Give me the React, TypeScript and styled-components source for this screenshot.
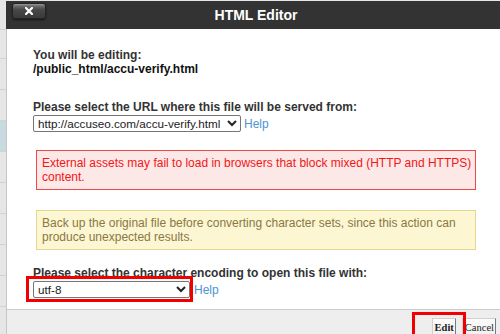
import React from "react";
import styled, { createGlobalStyle } from "styled-components";

const Global = createGlobalStyle`
  html, body { margin: 0; padding: 0; }
  body {
    background: #e6e6e6;
    font-family: "Liberation Sans", Arial, sans-serif;
    font-size: 12px;
    color: #333;
    overflow: hidden;
  }
`;

const Page = styled.div`
  display: flex;
  width: 500px;
  height: 334px;
  overflow: hidden;
`;

const Strip = styled.div`
  width: 6px;
  flex: none;
  display: flex;
  flex-direction: column;
`;

const StripRow = styled.div<{ $h: number; $blue?: boolean }>`
  height: ${(p) => p.$h}px;
  flex: none;
  background: ${(p) => (p.$blue ? "#c9d9e2" : "#e6e6e6")};
  border-bottom: 1px solid #d2d2d2;
`;

const Dialog = styled.div`
  flex: 1;
  margin-top: 1px;
  display: flex;
  flex-direction: column;
`;

const Header = styled.div`
  height: 28px;
  background: #333333;
  display: flex;
  align-items: flex-start;
  padding-left: 6px;
`;

const CloseButton = styled.button`
  width: 34px;
  height: 16px;
  margin-top: 2px;
  padding: 0;
  border: 1px solid #242424;
  border-radius: 3px;
  background: linear-gradient(#9a9a9a 0%, #6c6c6c 14%, #484848 40%, #3a3a3a 100%);
  box-shadow: 0 1px 2px rgba(0, 0, 0, 0.6);
  display: flex;
  align-items: center;
  justify-content: center;
`;

const Title = styled.div`
  flex: 1;
  text-align: center;
  color: #ffffff;
  font-weight: bold;
  font-size: 14px;
  line-height: 28px;
  margin-right: 34px;
`;

const Body = styled.div`
  background: #ffffff;
  border-left: 1px solid #c6c6c6;
  padding: 19px 24px 11px 26px;
  display: flex;
  flex-direction: column;
`;

const Label = styled.div<{ $dark?: boolean; $mt?: number }>`
  font-weight: bold;
  line-height: 14px;
  color: ${(p) => (p.$dark ? "#111" : "#333")};
  margin-top: ${(p) => p.$mt ?? 0}px;
`;

const SelectRow = styled.div`
  display: flex;
  align-items: center;
  margin-top: 1px;
  height: 17px;
`;

const SelectWrap = styled.div`
  position: relative;
  display: flex;
`;

const Select = styled.select<{ $w: number }>`
  width: ${(p) => p.$w}px;
  height: 17px;
  font-family: "Liberation Sans", Arial, sans-serif;
  font-size: 11.7px;
  color: #222;
  background: #fff;
  border: 1px solid #767676;
  border-radius: 2px;
  padding: 0;
  margin: 0;
`;

const Help = styled.a<{ $ml: number }>`
  color: #4d94d0;
  text-decoration: none;
  margin-left: ${(p) => p.$ml}px;
  line-height: 14px;
`;

const Notice = styled.div<{ $kind: "error" | "warn"; $mt: number }>`
  margin: ${(p) => p.$mt}px 0 0 3px;
  padding: 5px 2px 5px 5px;
  line-height: 14px;
  white-space: nowrap;
  border: 1px solid ${(p) => (p.$kind === "error" ? "#f04848" : "#e4d88e")};
  background: ${(p) => (p.$kind === "error" ? "#fde8e8" : "#fcf6d2")};
  color: ${(p) => (p.$kind === "error" ? "#f21616" : "#8a7843")};
`;

const Highlight = styled.div`
  position: absolute;
  top: -5px;
  left: -7px;
  width: 161px;
  height: 20px;
  border: 3px solid #f20000;
  pointer-events: none;
`;

const Footer = styled.div`
  position: relative;
  flex: 1;
  background: #eeeeee;
  border-top: 1px solid #cccccc;
  border-left: 1px solid #c6c6c6;
  display: flex;
  justify-content: flex-end;
  align-items: flex-start;
  gap: 6px;
  padding: 8px 4px 0 0;
`;

const FooterButton = styled.button<{ $bold?: boolean }>`
  font-family: "Liberation Serif", "Times New Roman", serif;
  font-size: 10.5px;
  font-weight: ${(p) => (p.$bold ? "bold" : "normal")};
  color: #222;
  background: linear-gradient(#fbfbfb, #ececec);
  border: 1px solid #d0d0d0;
  border-right-color: #7a7a7a;
  border-radius: 0;
  padding: 2px 1px 6px 2px;
  line-height: 14px;
  margin: 0;
`;

const EditHighlight = styled.div`
  position: absolute;
  top: 2px;
  right: 34px;
  width: 48px;
  height: 30px;
  border: 3px solid #f20000;
  pointer-events: none;
`;

const stripRows = [
  { h: 29 },
  { h: 28 },
  { h: 30 },
  { h: 30 },
  { h: 30, blue: true },
  { h: 30 },
  { h: 30 },
  { h: 30 },
  { h: 30 },
  { h: 30 },
];

export default function App() {
  return (
    <>
      <Global />
      <Page>
        <Strip>
          {stripRows.map((r, i) => (
            <StripRow key={i} $h={r.h} $blue={r.blue} />
          ))}
        </Strip>
        <Dialog>
          <Header>
            <CloseButton aria-label="Close">
              <svg width="8" height="8" viewBox="0 0 8 8">
                <path d="M1 1 L7 7 M7 1 L1 7" stroke="#ffffff" strokeWidth="2.2" strokeLinecap="square" />
              </svg>
            </CloseButton>
            <Title>HTML Editor</Title>
          </Header>
          <Body>
            <Label>You will be editing:</Label>
            <Label $dark>/public_html/accu-verify.html</Label>
            <Label $mt={24}>Please select the URL where this file will be served from:</Label>
            <SelectRow>
              <SelectWrap>
                <Select $w={208} defaultValue="u">
                  <option value="u">http://accuseo.com/accu-verify.html</option>
                </Select>
              </SelectWrap>
              <Help href="#" $ml={3}>Help</Help>
            </SelectRow>
            <Notice $kind="error" $mt={18}>
              External assets may fail to load in browsers that block mixed (HTTP and HTTPS)
              <br />
              content.
            </Notice>
            <Notice $kind="warn" $mt={20}>
              Back up the original file before converting character sets, since this action can
              <br />
              produce unexpected results.
            </Notice>
            <Label $mt={16}>Please select the character encoding to open this file with:</Label>
            <SelectRow>
              <SelectWrap>
                <Select $w={157} defaultValue="utf-8">
                  <option value="utf-8">utf-8</option>
                </Select>
                <Highlight />
              </SelectWrap>
              <Help href="#" $ml={4}>Help</Help>
            </SelectRow>
          </Body>
          <Footer>
            <FooterButton $bold>Edit</FooterButton>
            <FooterButton>Cancel</FooterButton>
            <EditHighlight />
          </Footer>
        </Dialog>
      </Page>
    </>
  );
}
